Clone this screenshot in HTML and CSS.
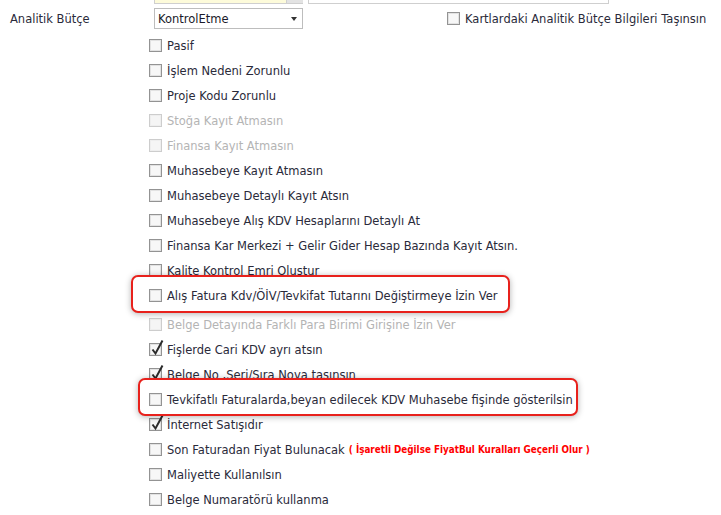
FILE: index.html
```html
<!DOCTYPE html>
<html lang="tr">
<head>
  <meta charset="UTF-8">
  <title>Fatura Ayarları</title>
  <link rel="stylesheet" href="styles.css">
</head>
<body>

<div class="form">
  <div class="field-row top-row">
    <span class="field-label"></span>
    <span class="input input-yellow"></span>
    <span class="lookup-btn"></span>
    <span class="input input-wide"></span>
  </div>

  <div class="field-row">
    <span class="field-label">Analitik Bütçe</span>
    <span class="select">KontrolEtme<span class="arrow"></span></span>
    <span class="check inline-check"><span class="box"></span>Kartlardaki Analitik Bütçe Bilgileri Taşınsın</span>
  </div>

  <div class="check-list">
    <div class="check"><span class="box"></span>Pasif</div>
    <div class="check"><span class="box"></span>İşlem Nedeni Zorunlu</div>
    <div class="check"><span class="box"></span>Proje Kodu Zorunlu</div>
    <div class="check disabled"><span class="box"></span>Stoğa Kayıt Atmasın</div>
    <div class="check disabled"><span class="box"></span>Finansa Kayıt Atmasın</div>
    <div class="check"><span class="box"></span>Muhasebeye Kayıt Atmasın</div>
    <div class="check"><span class="box"></span>Muhasebeye Detaylı Kayıt Atsın</div>
    <div class="check"><span class="box"></span>Muhasebeye Alış KDV Hesaplarını Detaylı At</div>
    <div class="check"><span class="box"></span>Finansa Kar Merkezi + Gelir Gider Hesap Bazında Kayıt Atsın.</div>
    <div class="check"><span class="box"></span>Kalite Kontrol Emri Oluştur</div>
    <div class="check marked marked-first"><span class="box"></span>Alış Fatura Kdv/ÖİV/Tevkifat Tutarını Değiştirmeye İzin Ver</div>
    <div class="check disabled"><span class="box"></span>Belge Detayında Farklı Para Birimi Girişine İzin Ver</div>
    <div class="check"><span class="box checked"><svg class="tick" width="14" height="17" viewBox="0 0 14 17"><path d="M2.5 10.5 L5.5 14.5 L12.5 1.5" fill="none" stroke="#2b2b2b" stroke-width="2"/></svg></span>Fişlerde Cari KDV ayrı atsın</div>
    <div class="check"><span class="box checked"><svg class="tick" width="14" height="17" viewBox="0 0 14 17"><path d="M2.5 10.5 L5.5 14.5 L12.5 1.5" fill="none" stroke="#2b2b2b" stroke-width="2"/></svg></span>Belge No ,Seri/Sıra Nova taşınsın</div>
    <div class="check marked marked-second"><span class="box"></span>Tevkifatlı Faturalarda,beyan edilecek KDV Muhasebe fişinde gösterilsin</div>
    <div class="check"><span class="box checked"><svg class="tick" width="14" height="17" viewBox="0 0 14 17"><path d="M2.5 10.5 L5.5 14.5 L12.5 1.5" fill="none" stroke="#2b2b2b" stroke-width="2"/></svg></span>İnternet Satışıdır</div>
    <div class="check"><span class="box"></span>Son Faturadan Fiyat Bulunacak<span class="note">( İşaretli Değilse FiyatBul Kuralları Geçerli Olur )</span></div>
    <div class="check"><span class="box"></span>Maliyette Kullanılsın</div>
    <div class="check"><span class="box"></span>Belge Numaratörü kullanma</div>
  </div>
</div>

</body>
</html>
```

FILE: styles.css
```css
body {
  margin: 0;
  background-color: #fff;
  font-family: "DejaVu Sans", Verdana, sans-serif;
  font-size: 11.5px;
  color: #2a2a3a;
  overflow: hidden;
}
.form {
  margin-top: -18px;
}
.field-row {
  display: flex;
  align-items: center;
  height: 21px;
  margin-bottom: 4px;
}
.top-row {
  height: 22px;
}
.field-label {
  width: 144px;
  padding-left: 10px;
  flex-shrink: 0;
}
.input {
  height: 22px;
  box-sizing: border-box;
  border: 1px solid #cfcfcf;
}
.input-yellow {
  width: 133px;
  background-color: #fdfbda;
}
.lookup-btn {
  width: 16px;
  height: 22px;
  background-color: #e3e3e3;
  border-bottom: 1px solid #cfcfcf;
  box-sizing: border-box;
}
.input-wide {
  width: 301px;
  margin-left: 5px;
  background-color: #fff;
}
.select {
  position: relative;
  width: 149px;
  height: 21px;
  box-sizing: border-box;
  border: 1px solid #bdbdbd;
  padding-left: 3px;
  display: flex;
  align-items: center;
  color: #1a1a2a;
}
.arrow {
  position: absolute;
  right: 5px;
  top: 8px;
  border-left: 3px solid transparent;
  border-right: 3px solid transparent;
  border-top: 4px solid #333;
}
.check {
  display: flex;
  align-items: center;
  height: 25px;
  white-space: nowrap;
}
.inline-check {
  margin-left: 144px;
  height: 21px;
}
.check-list {
  padding-left: 149px;
  margin-top: 3px;
}
.box {
  position: relative;
  width: 13px;
  height: 13px;
  box-sizing: border-box;
  border: 1px solid #939393;
  box-shadow: inset 0 0 0 1px #e2e2e2;
  background-color: #f7f7f7;
  margin-right: 5px;
  flex-shrink: 0;
}
.tick {
  position: absolute;
  left: 0;
  top: -5px;
}
.disabled {
  color: #b4b4b4;
}
.disabled .box {
  border-color: #cdcdcd;
  box-shadow: inset 0 0 0 1px #eeeeee;
  background-color: #f5f5f5;
}
.note {
  margin-left: 4px;
  color: #f00;
  font-weight: bold;
  font-size: 9.8px;
  font-family: "DejaVu Sans Condensed", "DejaVu Sans", sans-serif;
}
.marked {
  position: relative;
  z-index: 1;
  width: fit-content;
  background-color: #fff;
  border: 2px solid #e8211c;
  border-radius: 7px;
  box-shadow: 0 1px 6px rgba(0, 0, 0, 0.3);
}
.marked-first {
  margin: -8px 0 -1px -18px;
  padding: 6px 10px 3px 16px;
}
.marked-second {
  margin: -9px 0 -4px -11px;
  padding: 7px 3px 2px 9px;
}
```
